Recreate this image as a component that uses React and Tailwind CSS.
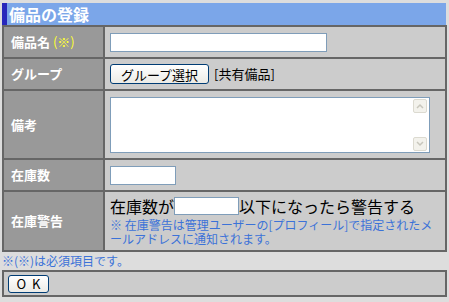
import React from "react";

const FONT = { fontFamily: '"Noto Sans CJK JP", "Noto Sans", sans-serif' };

const Label = ({ children, h }) => (
  <td className={`w-[101px] bg-[#999999] border-2 border-[#666666] pl-[7px] text-[13px] font-bold text-white align-middle ${h}`}>
    {children}
  </td>
);

const Cell = ({ children }) => (
  <td className="bg-[#cccccc] border-2 border-[#666666] pl-[5px] align-middle">{children}</td>
);

function Arrow({ up }) {
  return (
    <div className="w-[14px] h-[14px] bg-[#f3f2ec] border border-[#dcdad0] rounded-[2px] flex items-center justify-center">
      <svg width="8" height="6" viewBox="0 0 8 6">
        <path d={up ? "M1 5 L4 2 L7 5" : "M1 1 L4 4 L7 1"} stroke="#c8c6bc" strokeWidth="1.5" fill="none" />
      </svg>
    </div>
  );
}

export default function App() {
  return (
    <div className="w-[449px] h-[302px] bg-[#dddddd] pt-[3px] px-[2px]" style={FONT}>
      <div className="h-[22px] bg-[#7ba6e9] flex items-center border-l-[5px] border-[#2727bb] w-[444px]">
        <span className="pl-[2px] text-[16px] font-bold text-white leading-none">備品の登録</span>
      </div>
      <table className="w-[445px] border-collapse">
        <tbody>
          <tr>
            <Label h="h-[32px]">
              備品名 <span className="text-[#ffff33] font-normal">(※)</span>
            </Label>
            <Cell>
              <div className="w-[217px] h-[19px] bg-white border border-[#7f9db9]" />
            </Cell>
          </tr>
          <tr>
            <Label h="h-[32px]">グループ</Label>
            <Cell>
              <div className="flex items-center gap-[5px]">
                <div className="w-[99px] h-[20px] rounded-[3px] border border-[#003c74] bg-gradient-to-b from-white to-[#ecebe6] text-[13px] text-black flex items-center justify-center leading-none">
                  グループ選択
                </div>
                <span className="text-[13px] text-black">[共有備品]</span>
              </div>
            </Cell>
          </tr>
          <tr>
            <Label h="h-[69px]">備考</Label>
            <Cell>
              <div className="w-[320px] h-[56px] bg-white border border-[#7f9db9] flex justify-end">
                <div className="w-[16px] flex flex-col justify-between py-[1px]">
                  <Arrow up />
                  <Arrow />
                </div>
              </div>
            </Cell>
          </tr>
          <tr>
            <Label h="h-[32px]">在庫数</Label>
            <Cell>
              <div className="w-[66px] h-[19px] bg-white border border-[#7f9db9]" />
            </Cell>
          </tr>
          <tr>
            <Label h="h-[60px]">在庫警告</Label>
            <Cell>
              <div className="flex items-center h-[20px] text-[16px] text-black leading-[18px]">
                <span>在庫数が</span>
                <div className="w-[65px] h-[18px] bg-white border border-[#7f9db9]" />
                <span>以下になったら警告する</span>
              </div>
              <div className="mt-[2px] text-[12px] leading-[14px] text-[#3b72d8] pr-[4px]">
                ※ 在庫警告は管理ユーザーの[プロフィール]で指定されたメールアドレスに通知されます。
              </div>
            </Cell>
          </tr>
        </tbody>
      </table>
      <div className="h-[18px] text-[12px] leading-[18px] text-[#3b72d8]">※(※)は必須項目です。</div>
      <div className="w-[445px] h-[27px] bg-[#cccccc] border-2 border-[#666666] flex items-center pl-[4px]">
        <div className="w-[41px] h-[18px] rounded-[3px] border border-[#003c74] bg-gradient-to-b from-white to-[#ecebe6] text-[13px] text-black flex items-center justify-center leading-none tracking-[6px] pl-[6px]">
          OK
        </div>
      </div>
    </div>
  );
}
